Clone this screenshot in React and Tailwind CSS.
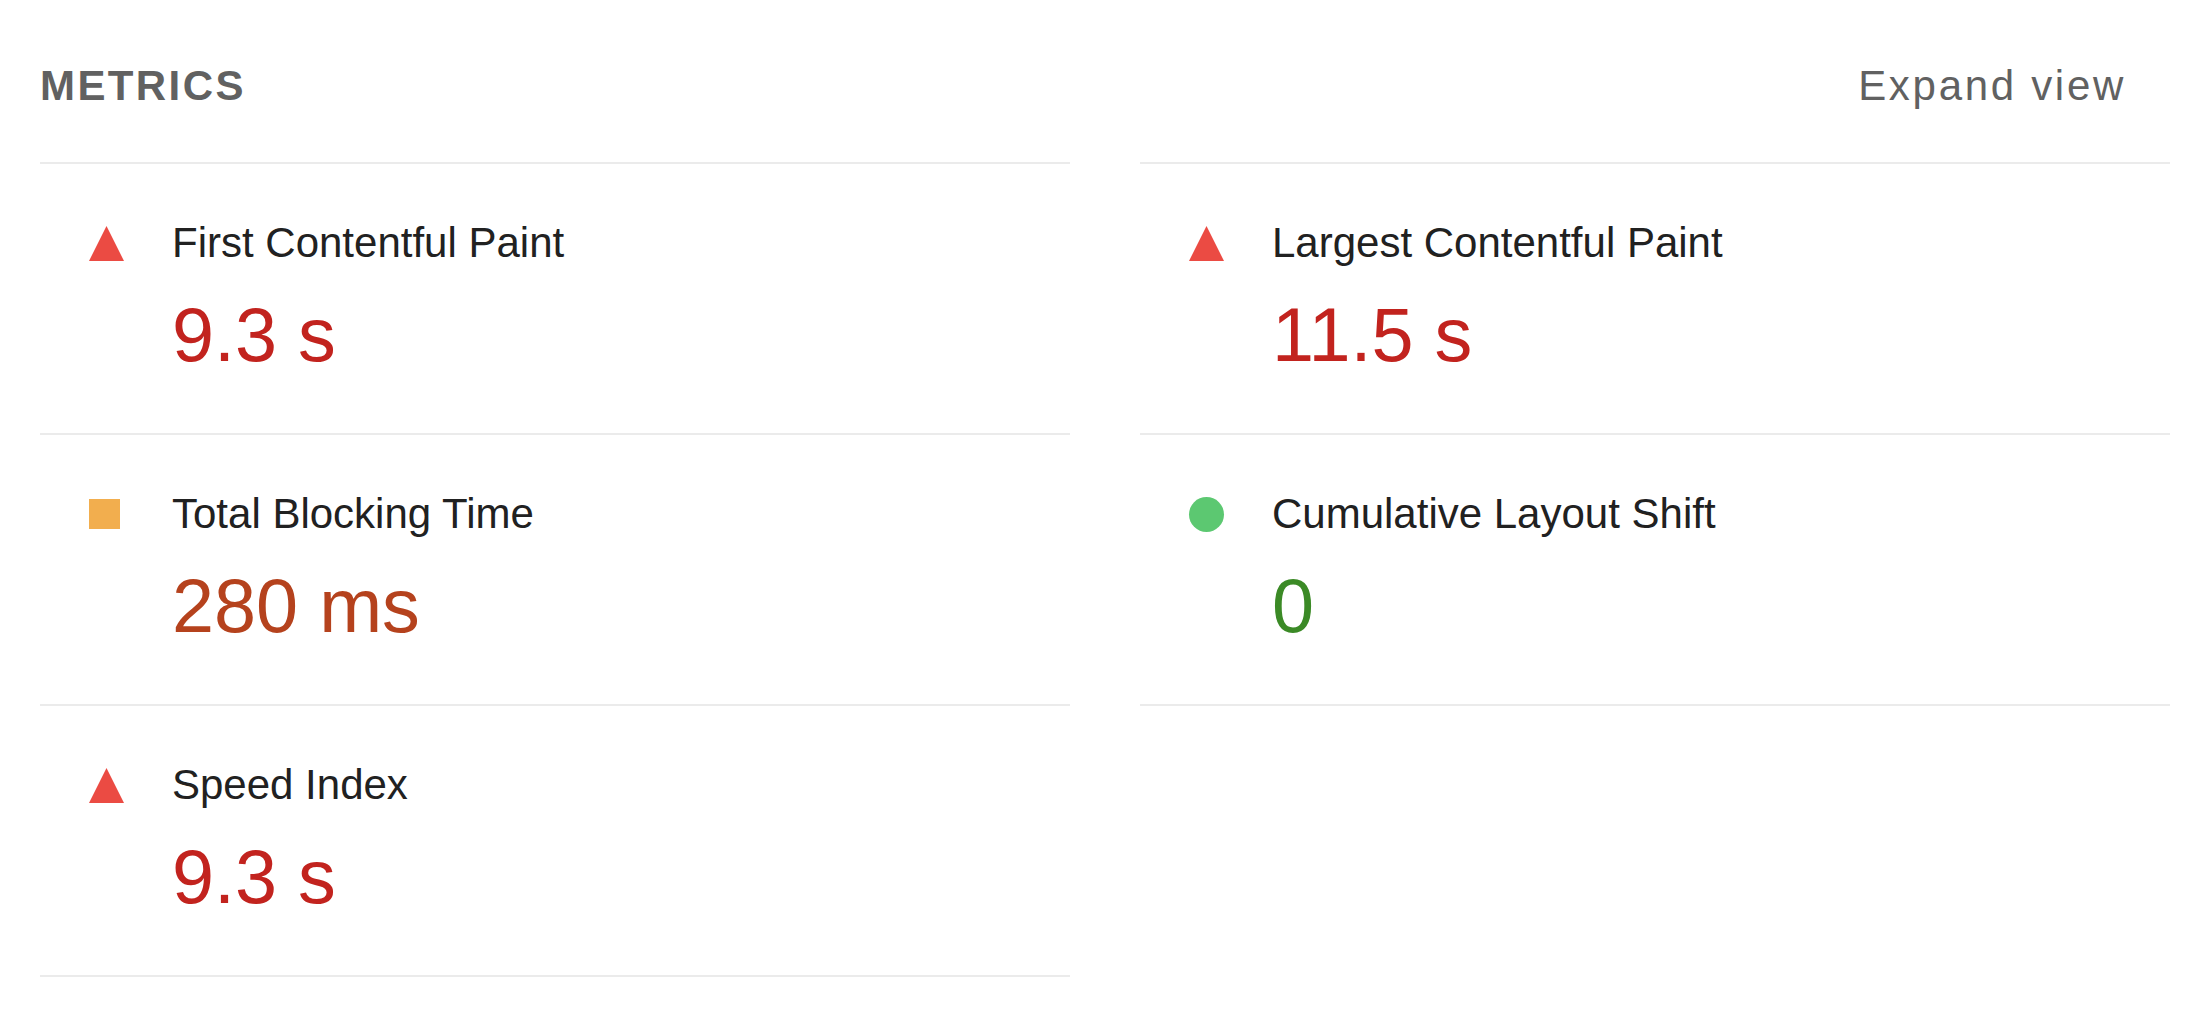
import React from 'react';

const metrics = [
    { id: 'fcp', label: 'First Contentful Paint', value: '9.3 s', rating: 'fail' },
    { id: 'lcp', label: 'Largest Contentful Paint', value: '11.5 s', rating: 'fail' },
    { id: 'tbt', label: 'Total Blocking Time', value: '280 ms', rating: 'average' },
    { id: 'cls', label: 'Cumulative Layout Shift', value: '0', rating: 'pass' },
    { id: 'si', label: 'Speed Index', value: '9.3 s', rating: 'fail' },
];

const valueColors = {
    fail: 'text-[#c2231e]',
    average: 'text-[#b5421d]',
    pass: 'text-[#3b8a26]',
};

function RatingIcon({ rating }) {
    if (rating === 'fail') {
        return (
            <svg width="35" height="35" viewBox="0 0 35 35">
                <polygon points="17.5,0 35,35 0,35" fill="#eb4b43" />
            </svg>
        );
    }
    if (rating === 'average') {
        return <div className="w-[31px] h-[30px] bg-[#f2ae4e]" />;
    }
    return <div className="w-[35px] h-[35px] rounded-full bg-[#5cc871]" />;
}

function MetricRow({ metric }) {
    return (
        <div className="h-[271px] border-b-2 border-[#ebebeb] pt-[55px] pl-[49px]">
            <div className="flex items-center h-[48px]">
                <div className="w-[35px] flex items-center">
                    <RatingIcon rating={metric.rating} />
                </div>
                <span className="ml-[48px] text-[42px] leading-[48px] text-[#212121]">{metric.label}</span>
            </div>
            <div className={`mt-[24px] ml-[83px] text-[75.6px] leading-[88px] ${valueColors[metric.rating]}`}>
                {metric.value}
            </div>
        </div>
    );
}

export default function App() {
    return (
        <div className="min-h-screen bg-white pl-[40px] pr-[36px] font-['Liberation_Sans',Arial,sans-serif]">
            {/* Header */}
            <div className="flex justify-between items-start pt-[62px] h-[162px]">
                <span className="text-[42px] leading-[48px] font-bold uppercase tracking-[2.4px] text-[#616161]">Metrics</span>
                <span className="text-[42px] leading-[48px] tracking-[2.7px] text-[#616161] mr-[44px]">Expand view</span>
            </div>

            {/* Metric grid */}
            <div className="grid grid-cols-2 gap-x-[70px]">
                <div className="border-t-2 border-[#ebebeb]">
                    {metrics.filter((m, i) => i % 2 === 0).map((m) => (
                        <MetricRow key={m.id} metric={m} />
                    ))}
                </div>
                <div className="border-t-2 border-[#ebebeb]">
                    {metrics.filter((m, i) => i % 2 === 1).map((m) => (
                        <MetricRow key={m.id} metric={m} />
                    ))}
                </div>
            </div>
        </div>
    );
}
